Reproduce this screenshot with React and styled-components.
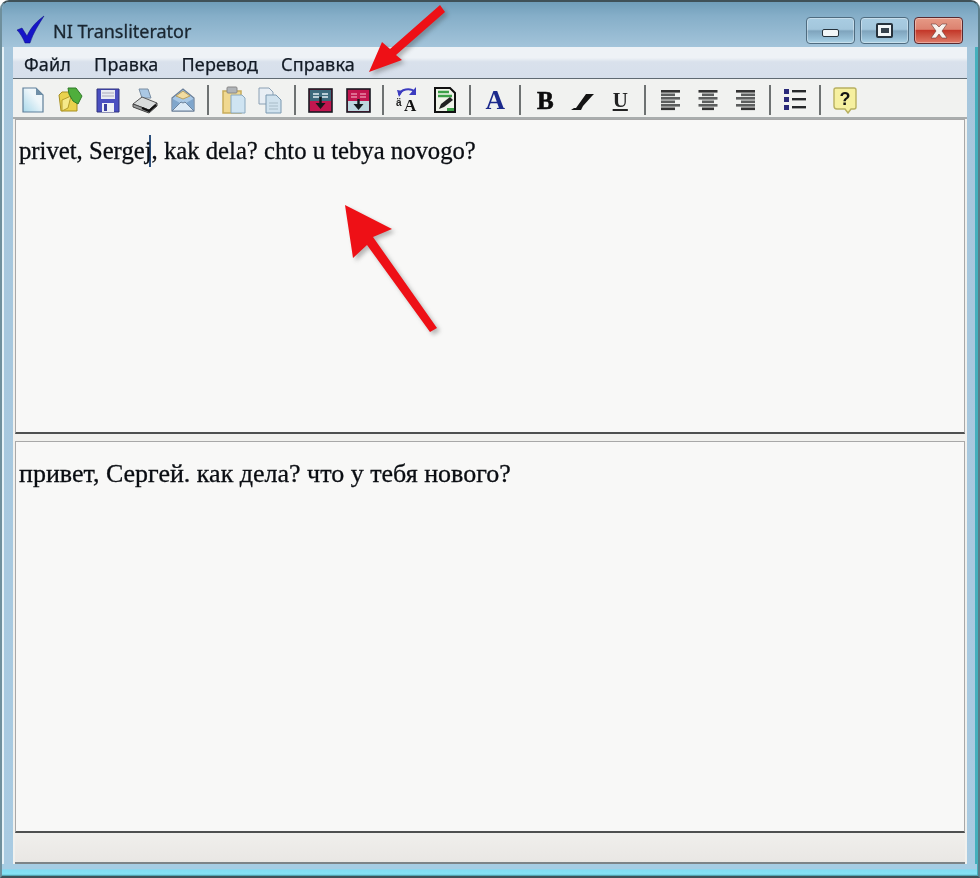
import React from "react";
import styled, { createGlobalStyle } from "styled-components";

const Global = createGlobalStyle`
  html, body { margin: 0; padding: 0; background: #f4f6f6; }
  * { box-sizing: border-box; }
`;

const Stage = styled.div`
  position: relative;
  width: 980px;
  height: 878px;
  overflow: hidden;
  background: #fff;
`;
const Win = styled.div`
  width: 980px;
  height: 878px;
  display: flex;
  flex-direction: column;
  border: 2px solid #3f5158;
  border-left-color: #6f8f9c;
  border-right-color: #5a7c88;
  border-radius: 9px 9px 0 0;
  background: linear-gradient(180deg, #6f9db9 0%, #89b2cc 2%, #a6c6dc 5%, #a9cbe2 100%);
  box-shadow: inset 2px 0 0 #e6f2f8, inset -3px 0 0 #45b0bd;
  filter: blur(0.55px);
`;
const TitleBar = styled.div`
  height: 45px;
  flex: none;
  display: flex;
  align-items: center;
  padding: 10px 15px 0 14px;
  background: linear-gradient(180deg, #6f9db9 0%, #85aec8 30%, #a3c4da 100%);
  border-radius: 7px 7px 0 0;
`;
const TitleText = styled.div`
  font-family: "Noto Sans", sans-serif;
  font-size: 18px;
  color: #1a2630;
  margin-left: 7px;
  flex: 1;
  padding-top: 2px;
  -webkit-text-stroke: 0.3px #1a2630;
`;
const WinBtn = styled.div`
  width: 49px;
  height: 27px;
  margin-left: ${(p) => (p.$first ? 0 : "5px")};
  margin-top: 2px;
  border-radius: 4px;
  border: 1px solid ${(p) => (p.$close ? "#5a2a30" : "#4f6c80")};
  box-shadow: inset 0 0 0 1px rgba(255, 255, 255, 0.35);
  background: ${(p) =>
    p.$close
      ? "linear-gradient(180deg,#e69a86 0%,#dc8270 45%,#c4382a 50%,#cf5a48 75%,#e07a68 100%)"
      : "linear-gradient(180deg,#a9cde2 0%,#a3c6dc 45%,#7fa4bd 52%,#94bcd4 80%,#abd2e6 100%)"};
  display: flex;
  align-items: center;
  justify-content: center;
`;
const MinGlyph = styled.div`
  width: 17px;
  height: 8px;
  margin-top: 4px;
  background: #f2f6f8;
  border: 1px solid #26323c;
  border-radius: 2px;
`;
const MaxGlyph = styled.div`
  width: 17px;
  height: 15px;
  background: #f2f6f8;
  border: 2px solid #26323c;
  border-radius: 2px;
  display: flex;
  align-items: center;
  justify-content: center;
  &::after {
    content: "";
    width: 8px;
    height: 5px;
    background: #36424c;
  }
`;
const Client = styled.div`
  flex: 1;
  margin: 0 11px;
  display: flex;
  flex-direction: column;
  min-height: 0;
`;
const MenuBar = styled.div`
  height: 32px;
  flex: none;
  display: flex;
  align-items: center;
  padding: 2px 0 0 11px;
  background: linear-gradient(180deg, #eef2f6 0%, #eef2f6 35%, #d9e1ec 48%, #d6dfeb 100%);
  border-bottom: 1px solid #5f6a72;
`;
const MenuItem = styled.div`
  font-family: "Noto Sans", sans-serif;
  font-size: 18px;
  color: #121a24;
  letter-spacing: 0.15px;
  -webkit-text-stroke: 0.25px #121a24;
  margin-right: ${(p) => p.$gap}px;
`;
const ToolBar = styled.div`
  height: 40px;
  flex: none;
  display: flex;
  align-items: center;
  padding: 4px 0 0 1px;
  background: #f1f2f0;
  border-bottom: 2px solid #a9adad;
`;
const Tool = styled.div`
  width: 37.5px;
  height: 30px;
  flex: none;
  display: flex;
  align-items: center;
  justify-content: center;
`;
const Sep = styled.div`
  width: 12.5px;
  height: 30px;
  flex: none;
  display: flex;
  justify-content: center;
  &::after {
    content: "";
    width: 2px;
    background: #6e7272;
  }
`;
const Editors = styled.div`
  flex: 1;
  display: flex;
  flex-direction: column;
  padding: 0 2px;
  background: #f1f1ee;
  min-height: 0;
`;
const Pane = styled.div`
  flex: ${(p) => (p.$grow ? "1" : "none")};
  height: ${(p) => (p.$grow ? "auto" : "315px")};
  background: #f8f8f7;
  border: 1px solid #a8a8a8;
  border-bottom: 2px solid #4e5050;
  padding: ${(p) => (p.$grow ? "15px" : "14px")} 3px 0;
  font-family: "Liberation Serif", serif;
  font-size: ${(p) => p.$size}px;
  line-height: 33px;
  color: #0a0d12;
  -webkit-text-stroke: 0.3px #0a0d12;
  white-space: nowrap;
`;
const Splitter = styled.div`
  height: 7px;
  flex: none;
`;
const Caret = styled.span`
  display: inline-block;
  width: 2px;
  height: 32px;
  margin: 0 -6px 0 4px;
  vertical-align: -8px;
  background: #2c4f7c;
`;
const StatusBar = styled.div`
  height: 31px;
  flex: none;
  background: linear-gradient(180deg, #f0efec 0%, #e9e7e4 100%);
  border-bottom: 2px solid #7d8488;
`;
const BottomEdge = styled.div`
  height: 12px;
  flex: none;
  margin-right: 1px;
  background: linear-gradient(180deg, #a6cde4 0%, #a6cde4 40%, #7fdcf2 50%, #85e2f5 85%, #3f8f9a 100%);
`;
const Overlay = styled.svg`
  position: absolute;
  inset: 0;
  width: 980px;
  height: 878px;
  pointer-events: none;
  filter: blur(0.5px) drop-shadow(3px 3px 2px rgba(60, 60, 60, 0.35));
`;
const Letter = styled.span`
  font-family: "Liberation Serif", serif;
  font-weight: 700;
  text-decoration: ${(p) => (p.$u ? "underline" : "none")};
  font-size: ${(p) => p.$size}px;
  color: ${(p) => p.$c};
  -webkit-text-stroke: ${(p) => (p.$heavy ? "0.6px" : "0")} ${(p) => p.$c};
  line-height: 1;
`;

const S = ({ children, w = 26, h = 28, vb = "0 0 26 28" }) => (
  <svg width={w} height={h} viewBox={vb}>
    {children}
  </svg>
);

const NewDoc = () => (
  <S>
    <defs>
      <linearGradient id="nd" x1="0" y1="1" x2="1" y2="0">
        <stop offset="0" stopColor="#a8d8ea" />
        <stop offset="0.6" stopColor="#eef6fa" />
      </linearGradient>
    </defs>
    <path d="M3 2h13l7 7v17H3z" fill="url(#nd)" stroke="#5f7f99" strokeWidth="1.2" />
    <path d="M16 2v7h7z" fill="#6f8fa8" />
  </S>
);
const OpenIcon = () => (
  <S>
    <path d="M2 9l3-3h7l2 2h6v17H4z" fill="#e9d24e" stroke="#a88f20" />
    <path d="M5 14l9-4-3 12-6 3z" fill="#f5e98a" stroke="#b59c2a" />
    <path d="M11 2l8 0 6 8-4 8-5-3-4-7z" fill="#4fae3c" stroke="#2f7a28" />
  </S>
);
const SaveIcon = () => (
  <S>
    <path d="M2 3h22v23H2z" fill="#4a4fc0" stroke="#2e327f" />
    <rect x="6" y="4" width="14" height="9" fill="#e8eaf2" />
    <path d="M7 7h12M7 10h12" stroke="#aab" />
    <rect x="7" y="17" width="12" height="9" fill="#eef0f6" />
    <rect x="9" y="18" width="3" height="7" fill="#3a3f9f" />
  </S>
);
const PrintIcon = () => (
  <S>
    <path d="M7 3h9l3 9H10z" fill="#aac8e4" stroke="#7a8ea2" />
    <path d="M1 18l9-7 15 6-8 7z" fill="#d9dcdc" stroke="#555" />
    <path d="M1 18v3l16 6 8-7v-3l-8 7z" fill="#9a9c9c" stroke="#444" />
    <path d="M10 22l7 3 7-6" stroke="#111" strokeWidth="2" fill="none" />
  </S>
);
const MailIcon = () => (
  <S>
    <path d="M2 12L13 3l11 9v13H2z" fill="#a8c8e6" stroke="#6a7f98" strokeWidth="1.2" />
    <path d="M6 10l7-5 7 5-7 3z" fill="#f2dca0" stroke="#b8a060" />
    <path d="M2 25l9-9 2 1 2-1 9 9z" fill="#dceaf6" stroke="#6a7f98" />
    <path d="M3 13l7 4-8 7zM23 13l-7 4 8 7z" fill="#7fa6cc" />
  </S>
);
const PasteIcon = () => (
  <S>
    <path d="M3 5h18v22H3z" fill="#f0d890" stroke="#c8ac5a" strokeWidth="1.5" />
    <rect x="7" y="1" width="10" height="6" rx="1" fill="#b0b4b8" stroke="#888" />
    <path d="M11 9h11l3 3v15H11z" fill="#cfe4f2" stroke="#8aa8be" />
  </S>
);
const CopyIcon = () => (
  <S>
    <path d="M2 2h10l4 4v12H2z" fill="#e8eef4" stroke="#8aa0b4" />
    <path d="M9 9h10l5 5v13H9z" fill="#d0e2ee" stroke="#7a98b0" />
    <path d="M12 17h9M12 20h9M12 23h9" stroke="#a8bcc8" />
  </S>
);
const SplitUp = () => (
  <S>
    <rect x="2" y="3" width="23" height="23" fill="#c2164f" stroke="#1a1a22" strokeWidth="1.6" />
    <rect x="3" y="4" width="21" height="11" fill="#3d6a7c" />
    <path d="M6 8h6M15 8h6M6 11h6M15 11h6" stroke="#e4eef2" strokeWidth="1.6" />
    <path d="M13.5 11v8" stroke="#14181c" strokeWidth="2.4" />
    <path d="M8.5 17h10l-5 6z" fill="#14181c" />
  </S>
);
const SplitDown = () => (
  <S>
    <rect x="2" y="3" width="23" height="23" fill="#c2164f" stroke="#1a1a22" strokeWidth="1.6" />
    <rect x="3" y="15" width="21" height="10" fill="#bcd6de" />
    <path d="M6 8h6M15 8h6M6 11h6M15 11h6" stroke="#e88aa8" strokeWidth="1.6" />
    <path d="M13.5 13v6" stroke="#14181c" strokeWidth="2.4" />
    <path d="M8.5 18h10l-5 6z" fill="#14181c" />
  </S>
);
const TranslitIcon = () => (
  <S>
    <path d="M4 9a9 7 0 0 1 16 -3" fill="none" stroke="#3c3cc0" strokeWidth="2" />
    <path d="M21 1v8h-7zM2 4l6 1-4 6z" fill="#3c3cc0" />
    <text x="1" y="20" fontFamily="Liberation Sans" fontWeight="700" fontSize="10" fill="#222">ä</text>
    <text x="9" y="25" fontFamily="Liberation Serif" fontWeight="700" fontSize="17" fill="#111">A</text>
  </S>
);
const EditDoc = () => (
  <S>
    <path d="M3 2h15l5 5v19H3z" fill="#f0f4ea" stroke="#111" strokeWidth="2" />
    <path d="M6 6h11M6 10h14" stroke="#3da048" strokeWidth="2.6" />
    <path d="M7 23l2-5 9-7 3 3-9 7z" fill="#222" />
    <path d="M15 22h7v3h-7z" fill="#3da048" />
  </S>
);
const ItalicIcon = () => (
  <S>
    <path d="M6 22l10-14h8l-2 2-9 10-2 4H1l3-2z" fill="#141414" />
  </S>
);
const Align = ({ mode }) => {
  const ys = [3, 6.5, 10, 13.5, 17, 20.5];
  return (
    <S w={22} h={26} vb="0 0 22 26">
      {ys.map((y, i) => {
        const long = i % 2 === 0;
        const len = mode === "center" ? (long ? 19 : 12) : long ? 19 : 14;
        const x = mode === "left" ? 2 : mode === "center" ? (22 - len) / 2 : 21 - len;
        const ends = i === 0 || i === ys.length - 1;
        return <rect key={y} x={x} y={y} width={len} height="2.6" fill={ends ? "#333" : "#5c5e5e"} />;
      })}
    </S>
  );
};
const ListIcon = () => (
  <S w={24} h={24} vb="0 0 24 24">
    {[3, 11, 19].map((y) => (
      <g key={y}>
        <rect x="1" y={y - 2} width="5" height="5" fill="#2a2a7a" />
        <rect x="9" y={y - 1} width="14" height="2.4" fill="#26282a" />
      </g>
    ))}
  </S>
);
const HelpIcon = () => (
  <S>
    <path d="M2 4q0-2 2-2h18q2 0 2 2v17q0 2-2 2h-3l-3 4-3-4H5q-3 0-3-3z" fill="#f6f0a0" stroke="#b8b060" strokeWidth="1.4" />
    <text x="13" y="19" textAnchor="middle" fontFamily="Liberation Sans" fontWeight="700" fontSize="18" fill="#141414">?</text>
  </S>
);

const tools = [
  <NewDoc />, <OpenIcon />, <SaveIcon />, <PrintIcon />, <MailIcon />, null,
  <PasteIcon />, <CopyIcon />, null,
  <SplitUp />, <SplitDown />, null,
  <TranslitIcon />, <EditDoc />, null,
  <Letter $c="#1c2a8c" $size={27}>A</Letter>, null,
  <Letter $c="#0c0c0c" $size={25} $heavy>B</Letter>, <ItalicIcon />, <Letter $c="#222" $size={21} $u>U</Letter>, null,
  <Align mode="left" />, <Align mode="center" />, <Align mode="right" />, null,
  <ListIcon />, null,
  <HelpIcon />,
];

export default function App() {
  return (
    <Stage>
      <Global />
      <Win>
        <TitleBar>
          <svg width="30" height="30" viewBox="0 0 30 30">
            <path d="M1 15l5-2 5 8C15 12 21 6 28 1c-5 8-11 17-14 27h-5C7 23 4 18 1 15z" fill="#1616c8" stroke="#0a0a80" strokeWidth="0.5" />
          </svg>
          <TitleText>NI Transliterator</TitleText>
          <WinBtn $first><MinGlyph /></WinBtn>
          <WinBtn><MaxGlyph /></WinBtn>
          <WinBtn $close>
            <svg width="20" height="16" viewBox="0 0 20 16">
              <path d="M2 1h5l3 3 3-3h5l-5 7 5 7h-5l-3-4-3 4H2l5-7z" fill="#f8f2ee" stroke="#6a3a38" strokeWidth="0.6" />
            </svg>
          </WinBtn>
        </TitleBar>
        <Client>
          <MenuBar>
            <MenuItem $gap={23}>Файл</MenuItem>
            <MenuItem $gap={23}>Правка</MenuItem>
            <MenuItem $gap={23}>Перевод</MenuItem>
            <MenuItem $gap={0}>Справка</MenuItem>
          </MenuBar>
          <ToolBar>
            {tools.map((t, i) => (t ? <Tool key={i}>{t}</Tool> : <Sep key={i} />))}
          </ToolBar>
          <Editors>
            <Pane $size={24.7}>
              privet, Serge<Caret />j, kak dela? chto u tebya novogo?
            </Pane>
            <Splitter />
            <Pane $grow $size={26}>привет, Сергей. как дела? что у тебя нового?</Pane>
            <StatusBar />
          </Editors>
        </Client>
        <BottomEdge />
      </Win>
      <Overlay viewBox="0 0 980 878">
        <polygon points="369,72 382,42 390,49 440,5 445,12 396,55 402,60" fill="#ee1016" />
        <polygon points="345,205 392,229 373,237 437,328 430,332 367,245 353,258" fill="#ee1016" />
      </Overlay>
    </Stage>
  );
}
